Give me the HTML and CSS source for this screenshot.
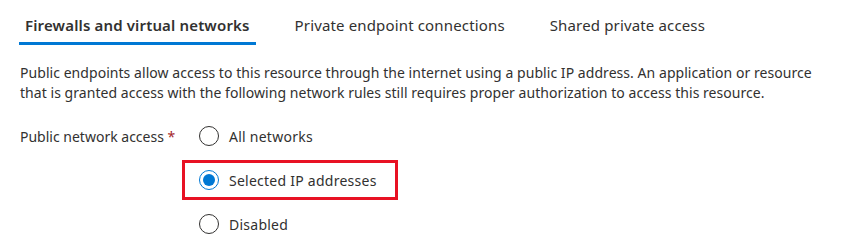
FILE: index.html
```html
<!DOCTYPE html>
<html lang="en">
<head>
    <meta charset="UTF-8">
    <meta name="viewport" content="width=device-width, initial-scale=1.0">
    <title>Networking</title>
    <link rel="stylesheet" href="styles.css">
</head>
<body>

    <!-- Tabs -->
    <div class="tabs">
        <div class="tab active">Firewalls and virtual networks</div>
        <div class="tab">Private endpoint connections</div>
        <div class="tab">Shared private access</div>
    </div>

    <p class="description">
        Public endpoints allow access to this resource through the internet using a public IP address. An application or resource<br>
        that is granted access with the following network rules still requires proper authorization to access this resource.
    </p>

    <!-- Public network access -->
    <div class="field">
        <div class="field-label">Public network access <span class="required">*</span></div>
        <div class="options">
            <label class="option">
                <span class="radio"></span>
                <span>All networks</span>
            </label>
            <label class="option highlight">
                <span class="radio checked"></span>
                <span>Selected IP addresses</span>
            </label>
            <label class="option">
                <span class="radio"></span>
                <span>Disabled</span>
            </label>
        </div>
    </div>

</body>
</html>
```

FILE: styles.css
```css
body {
    margin: 0;
    font-family: "Noto Sans", "Open Sans", sans-serif;
    font-size: 14px;
    color: #323130;
    background: #ffffff;
}
.tabs {
    display: flex;
    gap: 33px;
    padding: 8px 0 0 19px;
}
.tab {
    padding: 0 6px;
    font-size: 15px;
    letter-spacing: 0.15px;
    line-height: 34px;
    border-bottom: 3px solid transparent;
}
.tab.active {
    font-weight: 600;
    border-bottom-color: #0078d4;
}
.description {
    margin: 18px 20px 0 20px;
    line-height: 20px;
    letter-spacing: 0.05px;
}
.field {
    display: flex;
    padding-left: 20px;
    margin-top: 13px;
}
.field-label {
    width: 162px;
    padding-top: 11px;
    line-height: 20px;
}
.required {
    color: #a4262c;
}
.options {
    display: flex;
    flex-direction: column;
    align-items: flex-start;
    gap: 4px;
}
.option {
    display: flex;
    align-items: center;
    gap: 10px;
    height: 34px;
    padding: 0 18px 0 14px;
    border: 3px solid transparent;
    letter-spacing: 0.25px;
    cursor: pointer;
}
.option.highlight {
    border-color: #e81123;
}
.radio {
    width: 20px;
    height: 20px;
    box-sizing: border-box;
    border: 1px solid #323130;
    border-radius: 50%;
    display: flex;
    align-items: center;
    justify-content: center;
}
.radio.checked {
    border-color: #0078d4;
}
.radio.checked::after {
    content: "";
    width: 12px;
    height: 12px;
    border-radius: 50%;
    background: #0078d4;
}
```
